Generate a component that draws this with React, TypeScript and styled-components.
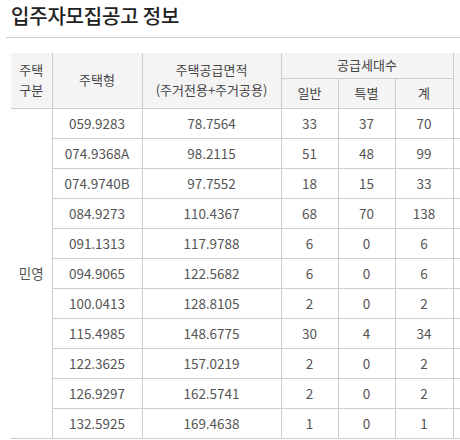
import React from "react";
import styled, { createGlobalStyle } from "styled-components";

const Global = createGlobalStyle`
  html, body { margin: 0; padding: 0; background: #fff; }
  body {
    font-family: "Noto Sans CJK KR", "Noto Sans", sans-serif;
    overflow: hidden;
  }
`;

const Page = styled.div`
  width: 460px;
  height: 440px;
  overflow: hidden;
  padding-left: 6px;
  box-sizing: border-box;
`;

const TitleBar = styled.div`
  height: 38px;
  border-bottom: 1px solid #cfcfcf;
  padding-left: 5px;
  box-sizing: border-box;
  display: flex;
  align-items: flex-start;
`;

const Title = styled.h2`
  margin: 0;
  padding-top: 3px;
  font-size: 20px;
  line-height: 26px;
  font-weight: 500;
  color: #222;
  letter-spacing: -0.2px;
`;

const TableWrap = styled.div`
  margin-top: 15px;
  margin-left: 5px;
`;

const Table = styled.table`
  border-collapse: collapse;
  table-layout: fixed;
  width: 502px;
  font-size: 13px;
  color: #555;
`;

const Th = styled.th<{ $h?: number; $noLeft?: boolean }>`
  background: #f4f4f4;
  font-weight: 400;
  color: #444;
  height: ${(p) => p.$h ?? 30}px;
  padding: 0;
  line-height: 20px;
  text-align: center;
  vertical-align: middle;
  border: 1px solid #cccccc;
  border-top: none;
  border-left: ${(p) => (p.$noLeft ? "none" : "1px solid #cccccc")};
  box-sizing: border-box;
`;

const Td = styled.td<{ $noLeft?: boolean }>`
  height: 30px;
  padding: 0;
  text-align: center;
  vertical-align: middle;
  border: 1px solid #cccccc;
  border-left: ${(p) => (p.$noLeft ? "none" : "1px solid #cccccc")};
  box-sizing: border-box;
  font-size: 13.5px;
  line-height: 20px;
`;

const rows: [string, string, number, number, number][] = [
  ["059.9283", "78.7564", 33, 37, 70],
  ["074.9368A", "98.2115", 51, 48, 99],
  ["074.9740B", "97.7552", 18, 15, 33],
  ["084.9273", "110.4367", 68, 70, 138],
  ["091.1313", "117.9788", 6, 0, 6],
  ["094.9065", "122.5682", 6, 0, 6],
  ["100.0413", "128.8105", 2, 0, 2],
  ["115.4985", "148.6775", 30, 4, 34],
  ["122.3625", "157.0219", 2, 0, 2],
  ["126.9297", "162.5741", 2, 0, 2],
  ["132.5925", "169.4638", 1, 0, 1],
];

export default function App() {
  return (
    <>
      <Global />
      <Page>
        <TitleBar>
          <Title>입주자모집공고 정보</Title>
        </TitleBar>
        <TableWrap>
          <Table>
            <colgroup>
              <col style={{ width: 41 }} />
              <col style={{ width: 90 }} />
              <col style={{ width: 139 }} />
              <col style={{ width: 57 }} />
              <col style={{ width: 57 }} />
              <col style={{ width: 58 }} />
              <col style={{ width: 60 }} />
            </colgroup>
            <thead>
              <tr>
                <Th rowSpan={2} $noLeft>
                  주택
                  <br />
                  구분
                </Th>
                <Th rowSpan={2}>주택형</Th>
                <Th rowSpan={2}>
                  주택공급면적
                  <br />
                  (주거전용+주거공용)
                </Th>
                <Th colSpan={3} $h={25}>
                  공급세대수
                </Th>
                <Th rowSpan={2}></Th>
              </tr>
              <tr>
                <Th>일반</Th>
                <Th>특별</Th>
                <Th>계</Th>
              </tr>
            </thead>
            <tbody>
              {rows.map((r, i) => (
                <tr key={r[0]}>
                  {i === 0 && (
                    <Td rowSpan={rows.length} $noLeft>
                      민영
                    </Td>
                  )}
                  <Td>{r[0]}</Td>
                  <Td>{r[1]}</Td>
                  <Td>{r[2]}</Td>
                  <Td>{r[3]}</Td>
                  <Td>{r[4]}</Td>
                  <Td></Td>
                </tr>
              ))}
            </tbody>
          </Table>
        </TableWrap>
      </Page>
    </>
  );
}
